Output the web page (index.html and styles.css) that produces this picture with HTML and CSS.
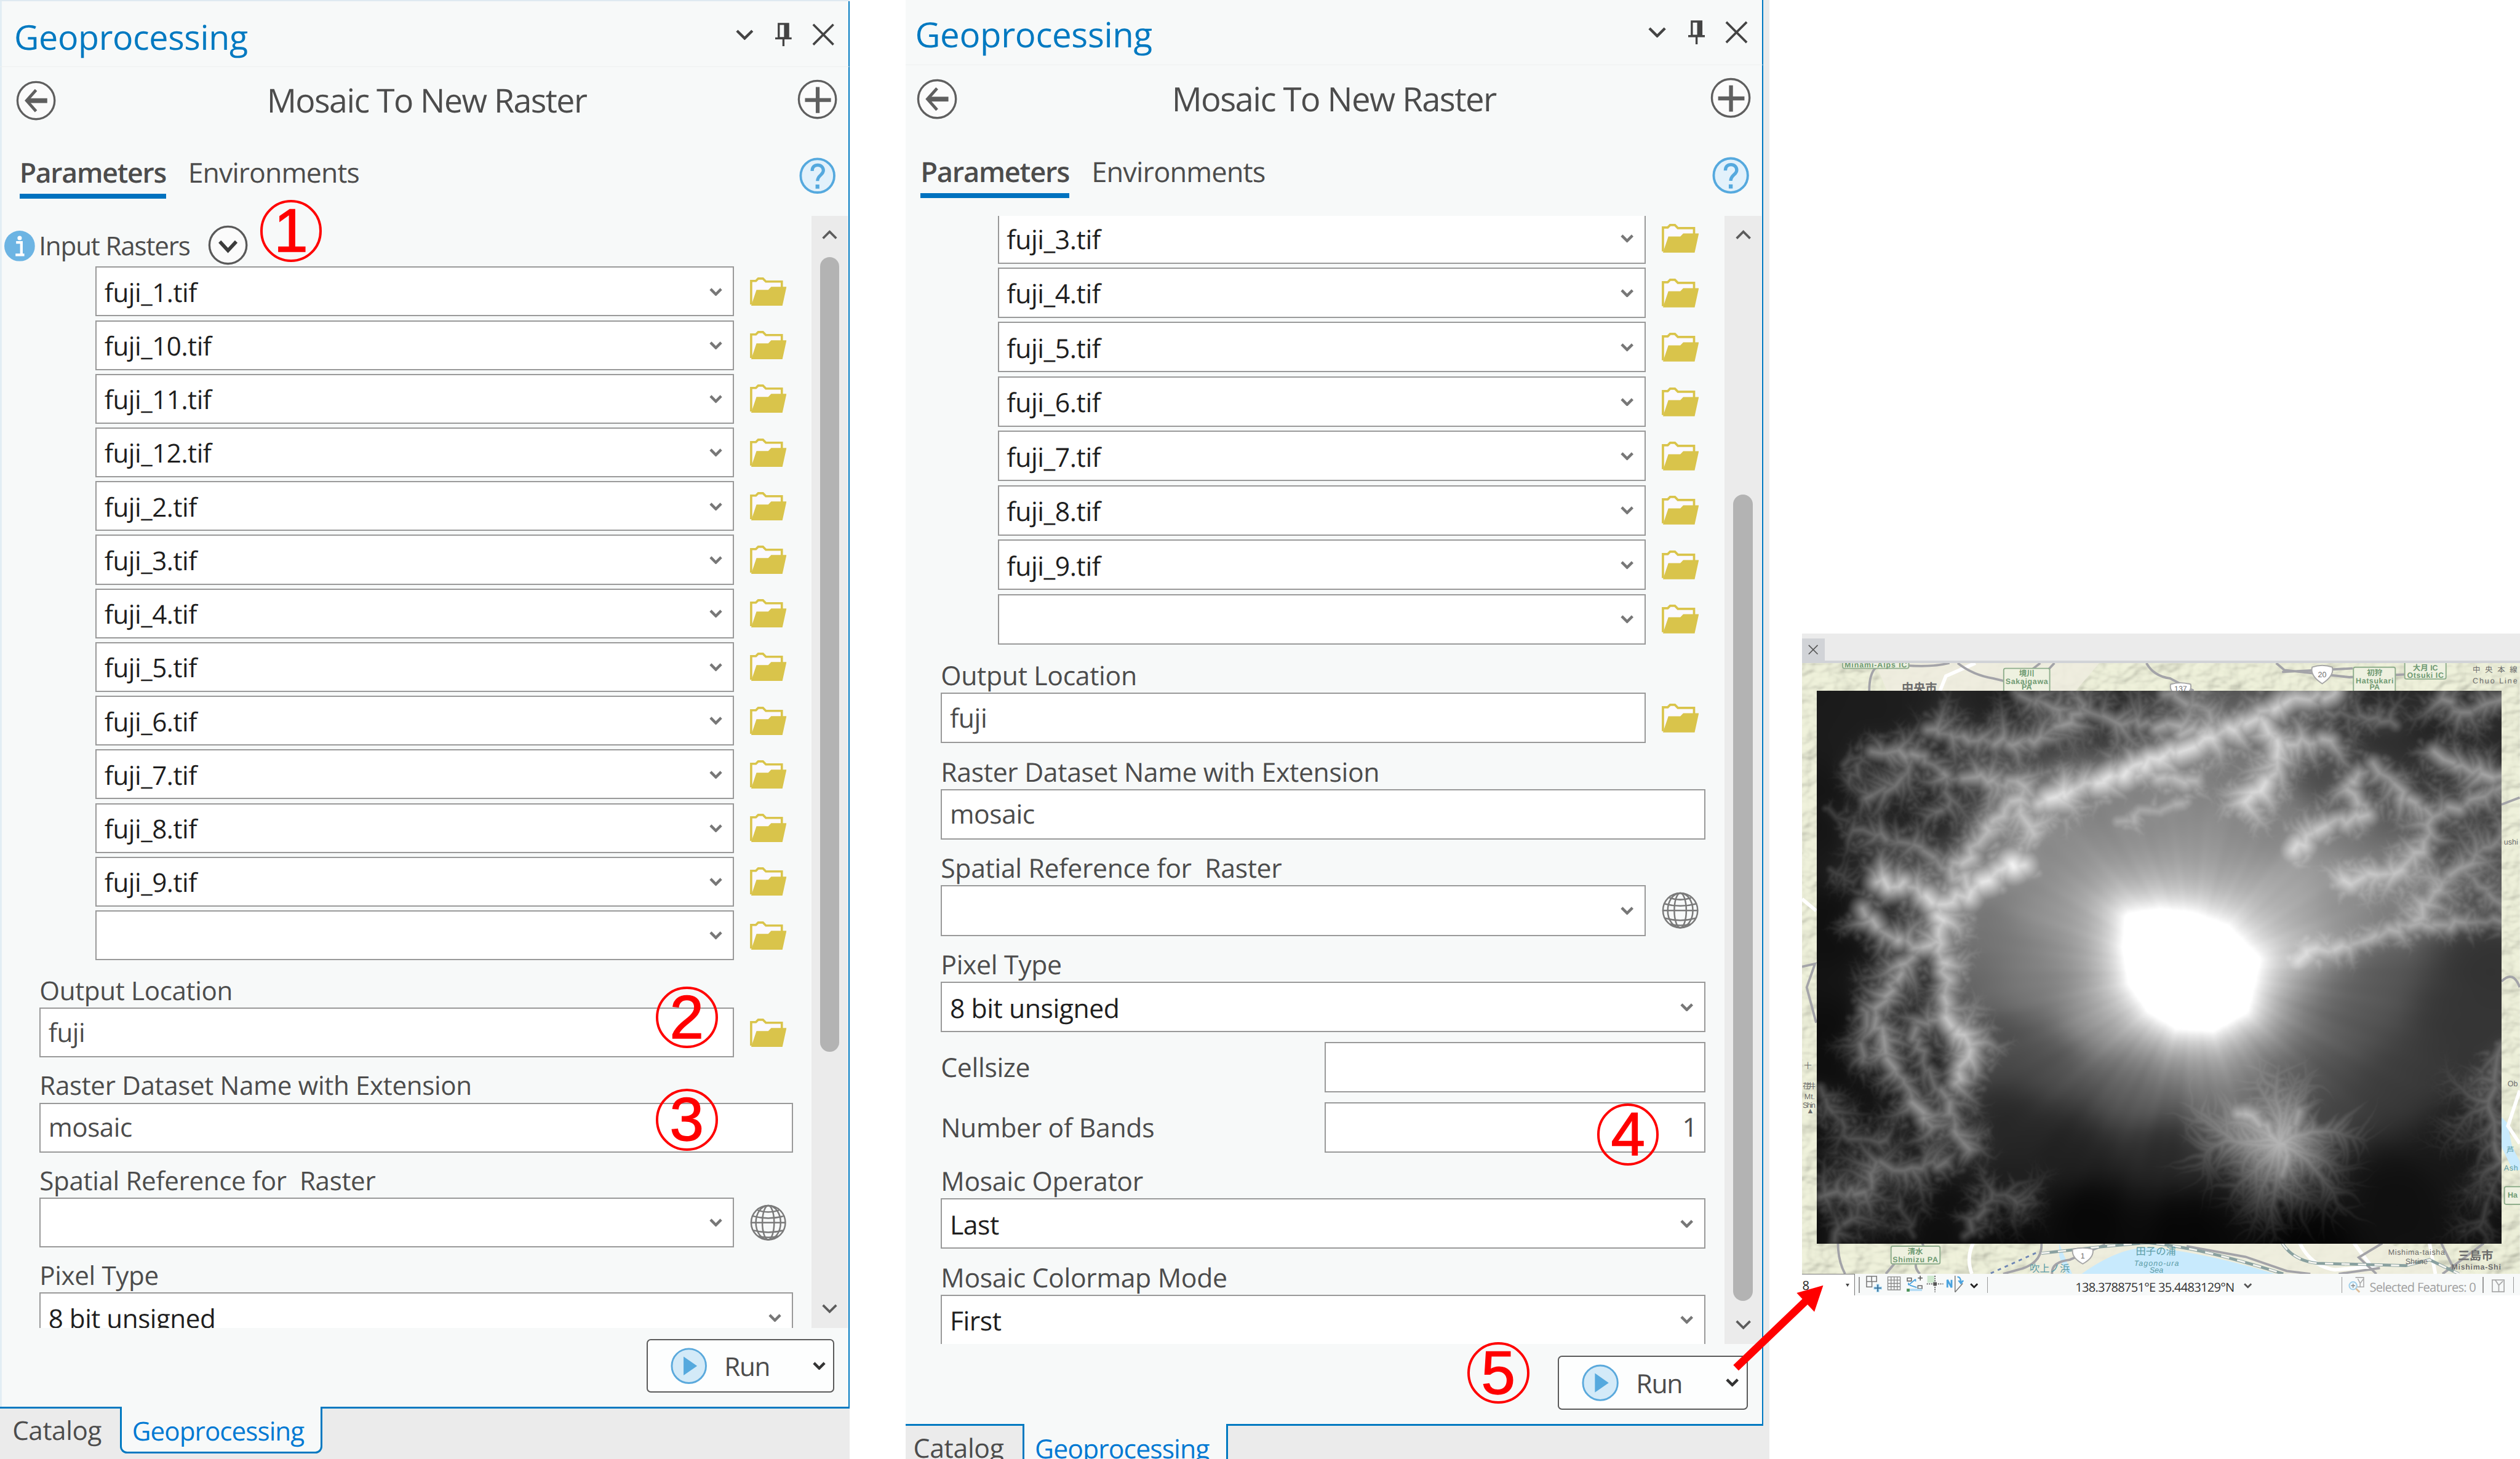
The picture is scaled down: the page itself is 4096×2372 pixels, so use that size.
FILE: index.html
```
<!DOCTYPE html>
<html lang="en">
<head>
<meta charset="utf-8">
<title>Mosaic To New Raster</title>
<link rel="stylesheet" href="styles.css">
</head>
<body>
<svg class="defs" width="0" height="0" aria-hidden="true">
  <symbol id="chev" viewBox="0 0 22 14"><path d="M2 2l9 9 9-9" fill="none" stroke="currentColor" stroke-width="4.600"/></symbol>
  <symbol id="chev-wide" viewBox="0 0 30 18"><path d="M2 2l13 13L28 2" fill="none" stroke="currentColor" stroke-width="4.500"/></symbol>
  <symbol id="pin" viewBox="0 0 28 40"><path d="M6 2h16v24H6z" fill="none" stroke="currentColor" stroke-width="3.500"/><path d="M15 2h8v24h-8z" fill="currentColor"/><path d="M0 26.500h28M14 27v13" fill="none" stroke="currentColor" stroke-width="3.500"/></symbol>
  <symbol id="cross" viewBox="0 0 40 40"><path d="M2 2l36 36M38 2L2 38" fill="none" stroke="currentColor" stroke-width="4"/></symbol>
  <symbol id="back" viewBox="0 0 68 68"><circle cx="34" cy="34" r="31.500" fill="#fbfbfb" stroke="currentColor" stroke-width="3.500"/><path d="M34 16L18 34l16 18" fill="none" stroke="currentColor" stroke-width="5"/><path d="M19 34h34" stroke="currentColor" stroke-width="8"/></symbol>
  <symbol id="plus" viewBox="0 0 68 68"><circle cx="34" cy="34" r="31.500" fill="#fbfbfb" stroke="currentColor" stroke-width="3.500"/><path d="M34.500 13v44M13 35h44" stroke="currentColor" stroke-width="6.500"/></symbol>
  <symbol id="down" viewBox="0 0 68 68"><circle cx="34" cy="34" r="31.500" fill="#fbfbfb" stroke="#5a5a5a" stroke-width="3.500"/><path d="M20 28l14 15 14-15" fill="none" stroke="#3c3c3c" stroke-width="6"/></symbol>
  <symbol id="help" viewBox="0 0 62 62"><circle cx="31" cy="31" r="28.500" fill="#e2f1fb" stroke="#55a9de" stroke-width="4"/><path d="M22 23c0-7 4-10 9.500-10S41 17 41 22c0 8-10 8-10 18" fill="none" stroke="#55a9de" stroke-width="5.500"/><path d="M31 46v7" stroke="#55a9de" stroke-width="6.500"/></symbol>
  <symbol id="info" viewBox="0 0 52 52"><circle cx="26" cy="26" r="26" fill="#6cb4e3"/><circle cx="26" cy="12.500" r="3.700" fill="#fff"/><path d="M20 20h9v20M19 41h15" fill="none" stroke="#fff" stroke-width="4.500"/></symbol>
  <symbol id="folder" viewBox="0 0 62 50"><path d="M2 46V6h8l4-4h8l5 5h27v12" fill="#fbf9ff" stroke="#d9c44b" stroke-width="3.800"/><path d="M2 48L11 21h20l5-5h26l-7 32z" fill="#d9c44b"/></symbol>
  <symbol id="globe" viewBox="0 0 62 62"><g fill="none" stroke="#7a7a7a" stroke-width="2.600"><circle cx="31" cy="31" r="29"/><ellipse cx="31" cy="31" rx="10" ry="29"/><ellipse cx="31" cy="31" rx="21" ry="29"/><path d="M2 31h58M5 20q26 7 52 0M5 44q26 7 52 0M13 10q18 6 36 0M14 54q17 4 34 0"/></g></symbol>
  <symbol id="play" viewBox="0 0 62 62"><circle cx="31" cy="31" r="29" fill="#d3eaf8" stroke="#5aa9dc" stroke-width="3"/><path d="M22 15v32l23-16z" fill="#55a9de"/></symbol>
</svg>

<main class="sheet">
  <section class="pane pane-a">
    <header class="titlebar"><h1>Geoprocessing</h1>
      <span class="winbtns"><svg class="wb-chev"><use href="#chev-wide"/></svg><svg class="wb-pin"><use href="#pin"/></svg><svg class="wb-x"><use href="#cross"/></svg></span></header>
    <div class="toolrow"><svg class="ic68 low"><use href="#back"/></svg><h2>Mosaic To New Raster</h2><svg class="ic68"><use href="#plus"/></svg></div>
    <nav class="tabs"><span class="tab on">Parameters</span><span class="tab">Environments</span><svg class="ic62"><use href="#help"/></svg></nav>
    <div class="body">
      <div class="form">
        <div class="inputs-head"><svg class="ic52"><use href="#info"/></svg><span>Input Rasters</span><svg class="ic68"><use href="#down"/></svg></div>
        <div class="rasters">
          <div class="line"><div class="box">fuji_1.tif<svg class="cv"><use href="#chev"/></svg></div><svg class="fd"><use href="#folder"/></svg></div>
          <div class="line"><div class="box">fuji_10.tif<svg class="cv"><use href="#chev"/></svg></div><svg class="fd"><use href="#folder"/></svg></div>
          <div class="line"><div class="box">fuji_11.tif<svg class="cv"><use href="#chev"/></svg></div><svg class="fd"><use href="#folder"/></svg></div>
          <div class="line"><div class="box">fuji_12.tif<svg class="cv"><use href="#chev"/></svg></div><svg class="fd"><use href="#folder"/></svg></div>
          <div class="line"><div class="box">fuji_2.tif<svg class="cv"><use href="#chev"/></svg></div><svg class="fd"><use href="#folder"/></svg></div>
          <div class="line"><div class="box">fuji_3.tif<svg class="cv"><use href="#chev"/></svg></div><svg class="fd"><use href="#folder"/></svg></div>
          <div class="line"><div class="box">fuji_4.tif<svg class="cv"><use href="#chev"/></svg></div><svg class="fd"><use href="#folder"/></svg></div>
          <div class="line"><div class="box">fuji_5.tif<svg class="cv"><use href="#chev"/></svg></div><svg class="fd"><use href="#folder"/></svg></div>
          <div class="line"><div class="box">fuji_6.tif<svg class="cv"><use href="#chev"/></svg></div><svg class="fd"><use href="#folder"/></svg></div>
          <div class="line"><div class="box">fuji_7.tif<svg class="cv"><use href="#chev"/></svg></div><svg class="fd"><use href="#folder"/></svg></div>
          <div class="line"><div class="box">fuji_8.tif<svg class="cv"><use href="#chev"/></svg></div><svg class="fd"><use href="#folder"/></svg></div>
          <div class="line"><div class="box">fuji_9.tif<svg class="cv"><use href="#chev"/></svg></div><svg class="fd"><use href="#folder"/></svg></div>
          <div class="line"><div class="box"><svg class="cv"><use href="#chev"/></svg></div><svg class="fd"><use href="#folder"/></svg></div>
        </div>
        <label class="lbl first">Output Location</label>
        <div class="line"><div class="box soft">fuji</div><svg class="fd"><use href="#folder"/></svg></div>
        <label class="lbl">Raster Dataset Name with Extension</label>
        <div class="line wide"><div class="box soft">mosaic</div></div>
        <label class="lbl">Spatial Reference for&nbsp; Raster</label>
        <div class="line"><div class="box"><svg class="cv"><use href="#chev"/></svg></div><svg class="gl"><use href="#globe"/></svg></div>
        <label class="lbl">Pixel Type</label>
        <div class="line wide"><div class="box">8 bit unsigned<svg class="cv"><use href="#chev"/></svg></div></div>
      </div>
      <div class="scroll"><svg class="arr up"><use href="#chev-wide"/></svg><div class="thumb thumb-a"></div><svg class="arr"><use href="#chev-wide"/></svg></div>
    </div>
    <footer class="foot"><div class="run"><svg class="ic62"><use href="#play"/></svg><span>Run</span><svg class="cv"><use href="#chev"/></svg></div></footer>
    <div class="docktabs"><span class="dock">Catalog</span><span class="dock active">Geoprocessing</span><span class="rest"></span></div>
  </section>

  <div class="pane-b-frame">
  <section class="pane pane-b">
    <header class="titlebar"><h1>Geoprocessing</h1>
      <span class="winbtns"><svg class="wb-chev"><use href="#chev-wide"/></svg><svg class="wb-pin"><use href="#pin"/></svg><svg class="wb-x"><use href="#cross"/></svg></span></header>
    <div class="toolrow"><svg class="ic68 low"><use href="#back"/></svg><h2>Mosaic To New Raster</h2><svg class="ic68"><use href="#plus"/></svg></div>
    <nav class="tabs"><span class="tab on">Parameters</span><span class="tab">Environments</span><svg class="ic62"><use href="#help"/></svg></nav>
    <div class="body">
      <div class="form scrolled">
        <div class="rasters">
          <div class="line"><div class="box">fuji_3.tif<svg class="cv"><use href="#chev"/></svg></div><svg class="fd"><use href="#folder"/></svg></div>
          <div class="line"><div class="box">fuji_4.tif<svg class="cv"><use href="#chev"/></svg></div><svg class="fd"><use href="#folder"/></svg></div>
          <div class="line"><div class="box">fuji_5.tif<svg class="cv"><use href="#chev"/></svg></div><svg class="fd"><use href="#folder"/></svg></div>
          <div class="line"><div class="box">fuji_6.tif<svg class="cv"><use href="#chev"/></svg></div><svg class="fd"><use href="#folder"/></svg></div>
          <div class="line"><div class="box">fuji_7.tif<svg class="cv"><use href="#chev"/></svg></div><svg class="fd"><use href="#folder"/></svg></div>
          <div class="line"><div class="box">fuji_8.tif<svg class="cv"><use href="#chev"/></svg></div><svg class="fd"><use href="#folder"/></svg></div>
          <div class="line"><div class="box">fuji_9.tif<svg class="cv"><use href="#chev"/></svg></div><svg class="fd"><use href="#folder"/></svg></div>
          <div class="line"><div class="box"><svg class="cv"><use href="#chev"/></svg></div><svg class="fd"><use href="#folder"/></svg></div>
        </div>
        <label class="lbl first">Output Location</label>
        <div class="line"><div class="box soft">fuji</div><svg class="fd"><use href="#folder"/></svg></div>
        <label class="lbl">Raster Dataset Name with Extension</label>
        <div class="line wide"><div class="box soft">mosaic</div></div>
        <label class="lbl">Spatial Reference for&nbsp; Raster</label>
        <div class="line"><div class="box"><svg class="cv"><use href="#chev"/></svg></div><svg class="gl"><use href="#globe"/></svg></div>
        <label class="lbl">Pixel Type</label>
        <div class="line wide"><div class="box">8 bit unsigned<svg class="cv"><use href="#chev"/></svg></div></div>
        <div class="line wide inline"><label>Cellsize</label><div class="box num"></div></div>
        <div class="line wide inline"><label>Number of Bands</label><div class="box num soft">1</div></div>
        <label class="lbl">Mosaic Operator</label>
        <div class="line wide"><div class="box">Last<svg class="cv"><use href="#chev"/></svg></div></div>
        <label class="lbl">Mosaic Colormap Mode</label>
        <div class="line wide"><div class="box">First<svg class="cv"><use href="#chev"/></svg></div></div>
      </div>
      <div class="scroll"><svg class="arr up"><use href="#chev-wide"/></svg><div class="thumb thumb-b"></div><svg class="arr"><use href="#chev-wide"/></svg></div>
    </div>
    <footer class="foot"><div class="run"><svg class="ic62"><use href="#play"/></svg><span>Run</span><svg class="cv"><use href="#chev"/></svg></div></footer>
    <div class="docktabs"><span class="dock">Catalog</span><span class="dock active">Geoprocessing</span><span class="rest"></span></div>
  </section>
  </div>

  <section class="mapwin">
    <div class="viewtabs"><span class="viewtab"><svg><use href="#cross"/></svg></span></div>
    <div class="mapview">
      <svg class="basemap" viewBox="3056 1125 1217 1036" preserveAspectRatio="none">
        <filter id="hills" x="0" y="0" width="100%" height="100%">
          <feTurbulence type="fractalNoise" baseFrequency="0.022 0.03" numOctaves="3" seed="7"/>
          <feDiffuseLighting surfaceScale="9" lighting-color="#f6f8e2"><feDistantLight azimuth="225" elevation="64"/></feDiffuseLighting>
        </filter>
        <rect x="3056" y="1125" width="1217" height="1036" fill="#e6e9d2"/>
        <rect x="3056" y="1125" width="1217" height="1036" filter="url(#hills)" opacity=".6"/>
        <path d="M3180 1125H3560L3520 1172H3200Z" fill="#efecdf" opacity=".85"/>
        <path d="M3440 2161L3470 2109H4050L4180 2161Z" fill="#eeedde" opacity=".85"/>
        <path d="M3530 2161Q3590 2118 3640 2116Q3730 2122 3858 2161Z" fill="#c8eafd"/>
        <path d="M3492 2109l8 20 14 32h-10l-12-30z" fill="#c8eafd"/>
        <path d="M4242 1895l10 10 8 40 13 25v15h-12l-19-40z" fill="#c8eafd"/>
        <g fill="none" stroke="#fff" stroke-width="6">
          <path d="M3290 1172l10-25 50-22M3346 2109q-12 25-2 52M3900 2109q20 40 60 45l70-6M4120 2109l10 52M3992 2109l30 40M4273 1850l-20 60 20 30M3056 1525l24 20"/>
        </g>
        <g fill="none" stroke="#a3a3a8" stroke-width="4">
          <path d="M3170 1172q0-30 12-40l30-5M3196 1125q70 10 110 0M3320 1125q25 20 60 26l50 12M3400 1172l60-47M3440 1172l44-47M3640 1125q12 22 40 26l40 21M3860 1125l14 12 110 12 160-8M3870 1140l120-6M3117 2109q0 30 12 52M3260 2109l8 20-18 12q-4 10 6 20M3198 2161l34-40M3462 2109q2 35-40 45l-25 7M3480 2161q-2-20 30-24l60-26M3708 2114l100 18 70 24 40 5M3966 2161l70-10M4040 2109l-40 24 30 28M4140 2109l22 45M4212 2109l-40 30-30 22M4242 1365l31-12M4242 1665q20-20 31 10M3056 1640l22-5-14 40 16 60"/>
        </g>
        <g fill="none" stroke="#89a09f" stroke-width="5"><path d="M3462 2126l110-12 70-6q90 8 230 53M3870 2109q20 30 60 34l150 4 40-10 50 24"/></g>
        <g fill="none" stroke="#f4f4f0" stroke-width="3" stroke-dasharray="14 14"><path d="M3462 2126l110-12 70-6q90 8 230 53M3870 2109q20 30 60 34l150 4 40-10 50 24"/></g>
        <path d="M3376 2160l82-37" fill="none" stroke="#6e86b5" stroke-width="3" stroke-dasharray="6 7"/>
        <g fill="#eef1e0" stroke="#8fae8c" stroke-width="2">
          <rect x="3125" y="1112" width="112" height="22" rx="3"/><rect x="3398" y="1134" width="78" height="44" rx="3"/><rect x="3991" y="1132" width="71" height="46" rx="3"/><rect x="4078" y="1118" width="70" height="34" rx="3"/><rect x="3207" y="2114" width="83" height="30" rx="3"/><rect x="4247" y="2013" width="40" height="30" rx="3"/>
        </g>
        <g fill="#fff" stroke="#a6a6a6" stroke-width="2">
          <path d="M3921 1132q17-6 34 0 4 14-17 28-21-14-17-28z"/><path d="M3681 1161q17-5 34 0 2 10-6 15h-22q-8-5-6-15z"/><path d="M3515 2119q17-4 34 0 3 14-17 25-20-11-17-25z"/>
        </g>
        <g class="lab" text-anchor="middle">
          <g class="green"><text x="3181" y="1132" textLength="106">Minami-Alps IC</text><text x="3437" y="1147">境川</text><text x="3437" y="1160" textLength="72">Sakaigawa</text><text x="3437" y="1170">PA</text>
          <text x="4027" y="1146">初狩</text><text x="4027" y="1159" textLength="64">Hatsukari</text><text x="4027" y="1170">PA</text>
          <text x="4113" y="1137">大月 IC</text><text x="4113" y="1150" textLength="62">Otsuki IC</text>
          <text x="3248" y="2128">清水</text><text x="3248" y="2141" textLength="77">Shimizu PA</text><text x="4261" y="2032">Ha</text></g>
          <g class="gray"><text x="3255" y="1174" class="big">中央市</text><text x="3938" y="1149">20</text><text x="3698" y="1173">137</text><text x="3532" y="2135">1</text>
          <text x="4231" y="1141" textLength="76">中央本線</text><text x="4231" y="1159" textLength="76">Chuo Line</text>
          <text x="4098" y="2129" textLength="96">Mishima-taisha</text><text x="4098" y="2144">Shrine</text><text x="4198" y="2137" class="big">三島市</text><text x="4199" y="2154" textLength="84" class="bold">Mishima-Shi</text>
          <text x="4258" y="1433" textLength="24">ushi</text><text x="4261" y="1843">Ob</text><text x="3066" y="1813">十</text><text x="3068" y="1847" textLength="22">荏井</text><text x="3069" y="1865" textLength="18">Mt.</text><text x="3068" y="1879" textLength="22">Shin</text><text x="3070" y="1889">▲</text></g>
          <g class="teal"><text x="3656" y="2129" class="mid">田子の浦</text><text x="3657" y="2147" font-style="italic" textLength="76">Tagono-ura</text><text x="3657" y="2159" font-style="italic">Sea</text><text x="3476" y="2158" class="mid">吹上ノ浜</text><text x="4257" y="1955">芦</text><text x="4258" y="1986" textLength="24">Ash</text></g>
        </g>
      </svg>
      <canvas class="dem" width="1161" height="937"></canvas>
    </div>
    <div class="status">
      <span class="scale">8<i class="tri"></i></span><i class="sep s1"></i>
      <svg class="tools" viewBox="0 0 168 30" fill="none">
        <g stroke="#777" stroke-width="1.600"><path d="M1 1h17v9H1zM1 10h9v9H1zM9.500 1v9"/></g><path d="M13 21h14M20 14v14" stroke="#a9dbf7" stroke-width="5"/><path d="M14 21h12M20 15v12" stroke="#3b6f95" stroke-width="2"/>
        <path d="M37 2h21v22H37zM42.500 2v22M47.700 2v22M53 2v22M37 7.500h21M37 13h21M37 18.500h21" stroke="#8a8a8a" stroke-width="1.400"/>
        <path d="M70 4h7v5h-7zM88 17h7v5h-7z" stroke="#666" stroke-width="1.600"/><path d="M88 4h8M92 0v8" stroke="#555" stroke-width="1.600"/><path d="M72 16L84 6M84 6v4M72 16v-4M74 16l12 4" stroke="#4aa3df" stroke-width="1.800"/><path d="M74 22h21v4H74z" fill="#b5dcf5"/><path d="M69 22h5v5h-5z" fill="#4b9158"/>
        <path d="M104 0h12v12h-12z" fill="#cfe9cf"/><path d="M103 14h28M117 0v28" stroke="#555" stroke-width="1.800" stroke-dasharray="2 1.800"/><path d="M114 11h6v6h-6z" fill="#555"/>
        <path d="M138 20V7l7 13V7" stroke="#4aa3df" stroke-width="3"/><path d="M151 0v28M151 28l13-15" stroke="#777" stroke-width="1.500"/><path d="M155 2q6 0 6 10M157 8l4 5 4-5" stroke="#4aa3df" stroke-width="2.500"/>
      </svg>
      <svg class="mini"><use href="#chev"/></svg><i class="sep s2"></i>
      <span class="coord">138.3788751°E 35.4483129°N</span><svg class="mini dim"><use href="#chev"/></svg>
      <i class="sep s3"></i>
      <svg class="selic" viewBox="0 0 28 28" fill="none"><path d="M12 2h14v16H14M20 12l6-8M20 12v6M20 12l-4-8" stroke="#aaa" stroke-width="1.600"/><circle cx="8" cy="16" r="6.500" fill="#eef8fd" stroke="#9fcfea" stroke-width="2"/><path d="M8 12.500v7M4.500 16h7" stroke="#888" stroke-width="1.500"/><path d="M13 21l6 6" stroke="#dcbc98" stroke-width="3"/></svg>
      <span class="sel">Selected Features: 0</span><i class="sep s4"></i>
      <svg class="boxic" viewBox="0 0 22 22" fill="none" stroke="#a8a8a8" stroke-width="1.800"><path d="M1 1h20v20H1zM6 1l6 9 7-7M12 10v11"/></svg><i class="sep s5"></i>
    </div>
  </section>

  <div class="mark m1">1</div><div class="mark m2">2</div><div class="mark m3">3</div><div class="mark m4">4</div><div class="mark m5">5</div>
  <svg class="pointer" viewBox="0 0 170 160"><path d="M10 149L128 36" stroke="#f00" stroke-width="13"/><path d="M158 9L113 22L143 54Z" fill="#f00"/></svg>
</main>
<script src="terrain.js"></script>
</body>
</html>
```
FILE: styles.css
```
html, body { margin: 0; padding: 0; background: #fff; }
body { --p: calc(100vw / 4273); overflow: hidden; font-family: "Open Sans", "Noto Sans", sans-serif; letter-spacing: -.022em; color: #4c4c4c; text-rendering: geometricPrecision; }
.defs { position: absolute; }
.sheet { position: relative; display: flex; align-items: flex-start; width: calc(4273 * var(--p)); height: calc(2475 * var(--p)); overflow: hidden; }
svg { display: block; flex: none; }
h1, h2 { margin: 0; font-weight: 400; }

.pane { --u: var(--p); box-sizing: border-box; width: calc(1441 * var(--u)); height: calc(2475 * var(--p)); display: flex; flex-direction: column; flex: none; background: #f7f9f9; font-size: calc(44 * var(--u)); }
.pane > * { flex: none; }
.pane-a { border-top: calc(3 * var(--u)) solid #dfeaf1; box-shadow: inset calc(3 * var(--u)) 0 #e2edf4; margin-right: calc(95 * var(--p)); }
.pane-b-frame { width: calc(1464 * var(--p)); height: calc(2475 * var(--p)); overflow: hidden; background: #ebebeb; flex: none; margin-right: calc(56 * var(--p)); }
.pane-b { --u: calc(var(--p) * 1.0145); margin: calc(-3 * var(--p)) 0 0 calc(-8.6 * var(--p)); width: calc(1442 * var(--u)); height: calc(2510 * var(--p)); }

.titlebar { height: calc(111 * var(--u)); border-bottom: calc(1 * var(--u)) solid #eef0f0; display: flex; justify-content: space-between; align-items: center; padding: 0 calc(24 * var(--u)) 0 calc(24 * var(--u)); border-right: calc(3 * var(--u)) solid #0079c1; }
.titlebar h1 { font-size: calc(58 * var(--u)); line-height: 1; color: #0079c1; padding-top: calc(11 * var(--u)); }
.winbtns { display: flex; align-items: center; color: #444; gap: calc(22 * var(--u)); padding-top: calc(3 * var(--u)); }
.wb-chev { width: calc(30 * var(--u)); height: calc(18 * var(--u)); margin-right: calc(15 * var(--u)); }
.wb-pin { width: calc(28 * var(--u)); height: calc(40 * var(--u)); margin-right: calc(12 * var(--u)); }
.wb-x { width: calc(38 * var(--u)); height: calc(38 * var(--u)); }
.toolrow { height: calc(112 * var(--u)); display: flex; align-items: center; justify-content: space-between; padding: 0 calc(19 * var(--u)) 0 calc(27 * var(--u)); color: #5f5f5f; border-right: calc(3 * var(--u)) solid #0079c1; }
.toolrow h2 { font-size: calc(56 * var(--u)); line-height: 1; color: #4c4c4c; letter-spacing: -.029em; }
.ic68 { width: calc(68 * var(--u)); height: calc(68 * var(--u)); }
.toolrow .ic68 { margin-top: calc(-4 * var(--u)); }
.toolrow .ic68.low { margin-top: calc(2 * var(--u)); }
.ic62 { width: calc(62 * var(--u)); height: calc(62 * var(--u)); }
.ic52 { width: calc(52 * var(--u)); height: calc(52 * var(--u)); }
.tabs { height: calc(140 * var(--u)); display: flex; align-items: flex-start; padding: calc(36 * var(--u)) calc(22 * var(--u)) 0 calc(33 * var(--u)); box-sizing: border-box; gap: calc(37 * var(--u)); font-size: calc(46.500 * var(--u)); letter-spacing: -.02em; border-right: calc(3 * var(--u)) solid #0079c1; }
.tab { line-height: calc(62 * var(--u)); height: calc(65 * var(--u)); padding-bottom: calc(1 * var(--u)); }
.tab.on { font-weight: 600; border-bottom: calc(9 * var(--u)) solid #0072bf; width: calc(249 * var(--u)); letter-spacing: -.028em; }
.tabs svg { margin: calc(5 * var(--u)) 0 0 auto; }

.body { height: calc(1886 * var(--u)); display: flex; border-right: calc(3 * var(--u)) solid #0079c1; overflow: hidden; }
.form { flex: 1; min-width: 0; }
.form.scrolled { margin-top: calc(-5 * var(--u)); }
.inputs-head { height: calc(86 * var(--u)); box-sizing: border-box; padding: calc(17 * var(--u)) 0 0 calc(7 * var(--u)); display: flex; align-items: center; white-space: nowrap; letter-spacing: -.028em; }
.inputs-head span { margin: 0 calc(20 * var(--u)) 0 calc(7 * var(--u)); width: calc(267 * var(--u)); line-height: 1; }
.inputs-head .ic68 { margin-top: calc(-3 * var(--u)); }
.rasters { padding-left: calc(95 * var(--u)); display: grid; gap: calc(6.400 * var(--u)); }
.line { height: calc(84.600 * var(--u)); margin-left: calc(67 * var(--u)); width: calc(1267 * var(--u)); display: flex; align-items: center; gap: calc(27 * var(--u)); }
.rasters .line { width: calc(1172 * var(--u)); }
.line.wide { width: calc(1278 * var(--u)); }
.box { flex: 1; height: 100%; box-sizing: border-box; border: calc(3 * var(--u)) solid #999; background: #fff; color: #1e1e1e; display: flex; align-items: center; justify-content: space-between; padding: calc(4 * var(--u)) calc(18 * var(--u)) 0 calc(13 * var(--u)); line-height: 1; white-space: pre; letter-spacing: -.011em; }
.box.soft { color: #4c4c4c; padding-top: 0; }
.cv { width: calc(22 * var(--u)); height: calc(14 * var(--u)); color: #777; margin-left: auto; margin-top: calc(-3 * var(--u)); }
.fd { width: calc(62 * var(--u)); height: calc(50 * var(--u)); margin-top: calc(2 * var(--u)); }
.gl { width: calc(62 * var(--u)); height: calc(62 * var(--u)); }
.lbl { display: block; box-sizing: border-box; height: calc(76.400 * var(--u)); padding: calc(26 * var(--u)) 0 0 calc(67 * var(--u)); line-height: calc(44 * var(--u)); white-space: pre; }
.lbl.first { height: calc(80.500 * var(--u)); padding-top: calc(30 * var(--u)); }
.line.inline { margin-top: calc(16 * var(--u)); justify-content: space-between; }
.box.num { flex: none; width: calc(637 * var(--u)); justify-content: flex-end; padding-right: calc(12 * var(--u)); }
.scroll { width: calc(62 * var(--u)); background: #ebebeb; display: flex; flex-direction: column; align-items: center; padding: calc(24 * var(--u)) 0; box-sizing: border-box; color: #5c5c5c; margin-right: calc(1 * var(--u)); }
.arr { width: calc(26 * var(--u)); height: calc(16 * var(--u)); margin-top: auto; }
.arr.up { transform: scaleY(-1); margin-top: 0; }
.thumb { width: calc(33 * var(--u)); border-radius: calc(17 * var(--u)); background: #b3b3b3; }
.thumb-a { margin-top: calc(30 * var(--u)); height: calc(1348 * var(--u)); }
.thumb-b { margin-top: calc(426 * var(--u)); height: calc(1348 * var(--u)); }

.foot { height: calc(134 * var(--u)); border-right: calc(3 * var(--u)) solid #0079c1; display: flex; justify-content: flex-end; align-items: flex-start; padding: calc(19 * var(--u)) calc(24 * var(--u)) 0 0; box-sizing: border-box; }
.run { width: calc(318 * var(--u)); height: calc(91 * var(--u)); box-sizing: border-box; border: calc(3 * var(--u)) solid #5a5a5a; border-radius: calc(7 * var(--u)); background: #fdfefe; display: flex; align-items: center; padding: 0 calc(13 * var(--u)) 0 calc(38 * var(--u)); }
.run span { margin-left: calc(29 * var(--u)); line-height: 1; padding-top: calc(3 * var(--u)); letter-spacing: -.03em; }
.run .cv { color: #333; margin-top: 0; }
.docktabs { height: calc(88 * var(--u)); display: flex; align-items: flex-start; background: #ebebeb; }
.dock { box-sizing: border-box; height: calc(79 * var(--u)); line-height: calc(75 * var(--u)); width: calc(203 * var(--u)); padding-left: calc(21 * var(--u)); border-top: calc(4 * var(--u)) solid #0079c1; letter-spacing: -.008em; }
.dock.active { width: calc(344 * var(--u)); padding-left: calc(18 * var(--u)); border: calc(4 * var(--u)) solid #0079c1; border-top: 0; border-radius: 0 0 calc(12 * var(--u)) calc(12 * var(--u)); background: #f7f9f9; color: #0079d3; line-height: calc(83 * var(--u)); letter-spacing: -.022em; }
.rest { flex: 1; border-top: calc(4 * var(--u)) solid #0079c1; }

.mapwin { width: calc(1217 * var(--p)); margin-top: calc(1074 * var(--p)); flex: none; }
.viewtabs { height: calc(51 * var(--p)); box-sizing: border-box; background: #ebebeb; border-bottom: calc(5 * var(--p)) solid #d1d3d7; display: flex; align-items: flex-end; }
.viewtab { width: calc(38 * var(--p)); height: calc(38 * var(--p)); background: #d1d3d7; display: grid; place-items: center; color: #555; }
.viewtab svg { width: calc(17 * var(--p)); height: calc(17 * var(--p)); }
.mapview { height: calc(1036 * var(--p)); position: relative; overflow: hidden; }
.basemap { width: 100%; height: 100%; }
.dem { position: absolute; left: calc(25 * var(--p)); top: calc(47 * var(--p)); width: calc(1161 * var(--p)); height: calc(937 * var(--p)); }
.lab { font-family: "Liberation Sans", "Noto Sans CJK JP", sans-serif; font-size: 13px; letter-spacing: 0; }
.green { fill: #6f9a72; font-weight: 600; }
.gray { fill: #6b6b6b; }
.teal { fill: #5c9ca6; }
.big { font-size: 20px; font-weight: 700; }
.mid { font-size: 17px; }
.bold { font-weight: 700; }
.status { height: calc(36 * var(--p)); background: #f7f9f9; display: flex; align-items: center; font-size: calc(21 * var(--p)); line-height: 1; white-space: pre; letter-spacing: -.038em; }
.status > * { flex: none; }
.scale { width: calc(89 * var(--p)); height: 100%; box-sizing: border-box; background: #fff; border-top: calc(2 * var(--p)) solid #777; border-right: calc(2 * var(--p)) solid #777; display: flex; align-items: center; justify-content: space-between; padding-right: calc(8 * var(--p)); color: #222; }
.tri { border: calc(4 * var(--p)) solid transparent; border-top: calc(6 * var(--p)) solid #444; border-bottom: 0; }
.sep { width: calc(1.600 * var(--p)); height: calc(27 * var(--p)); background: #999; }
.s1 { margin: 0 calc(11 * var(--p)) 0 calc(7 * var(--p)); }
.tools { width: calc(168 * var(--p)); height: calc(30 * var(--p)); }
.mini { width: calc(14 * var(--p)); height: calc(9 * var(--p)); color: #222; margin-left: calc(8 * var(--p)); margin-top: calc(4 * var(--p)); }
.s2 { margin: 0 calc(148 * var(--p)) 0 calc(15 * var(--p)); }
.coord { width: calc(264 * var(--p)); color: #333; padding-top: calc(8 * var(--p)); }
.mini.dim { margin-left: calc(20 * var(--p)); width: calc(16 * var(--p)); color: #555; }
.status .s3 { margin-left: auto; }
.selic { width: calc(28 * var(--p)); height: calc(30 * var(--p)); margin: 0 calc(8 * var(--p)) 0 calc(10 * var(--p)); }
.sel { width: calc(181 * var(--p)); color: #a0a0a0; padding-top: calc(6 * var(--p)); }
.s4 { margin: 0 calc(14 * var(--p)) 0 calc(11 * var(--p)); }
.boxic { width: calc(22 * var(--p)); height: calc(22 * var(--p)); margin-top: calc(4 * var(--p)); }
.s5 { margin: 0 calc(10 * var(--p)) 0 calc(14 * var(--p)); }

.mark { position: absolute; box-sizing: border-box; width: calc(105 * var(--p)); height: calc(105 * var(--p)); border: calc(4.500 * var(--p)) solid #f00; border-radius: 50%; color: #f00; font: 400 calc(104 * var(--p)) / calc(97 * var(--p)) "Liberation Sans", sans-serif; text-align: center; letter-spacing: 0; -webkit-text-stroke: calc(1.500 * var(--p)) #f00; }
.m1 { left: calc(441 * var(--p)); top: calc(339 * var(--p)); }
.m2 { left: calc(1112 * var(--p)); top: calc(1673 * var(--p)); }
.m3 { left: calc(1112 * var(--p)); top: calc(1847 * var(--p)); }
.m4 { left: calc(2708 * var(--p)); top: calc(1872 * var(--p)); }
.m5 { left: calc(2488 * var(--p)); top: calc(2276 * var(--p)); }
.pointer { position: absolute; left: calc(2934 * var(--p)); top: calc(2171 * var(--p)); width: calc(170 * var(--p)); height: calc(160 * var(--p)); }
```
FILE: terrain.js
```
// Shaded elevation raster: smooth base surface plus branching ridge lines.
(function () {
  const cv = document.querySelector('.dem'), W = cv.width, H = cv.height;
  const ctx = cv.getContext('2d');
  const SX = W / 1477, SY = H / 1267, OX = 52, OY = 151;
  let seed = 4211;
  const rnd = () => { seed = (seed * 1664525 + 1013904223) >>> 0; return seed / 4294967296; };
  const ridge = new Float32Array(W * H);
  const SLOPE = 3.6;

  // every crest falls away at the same rate, so neighbours meet in a sharp valley
  function seg(x0, y0, a0, x1, y1, a1) {
    const R = Math.max(a0, a1) / SLOPE, dx = x1 - x0, dy = y1 - y0, L = dx * dx + dy * dy || 1;
    const xa = Math.max(0, Math.floor(Math.min(x0, x1) - R)), xb = Math.min(W - 1, Math.ceil(Math.max(x0, x1) + R));
    const ya = Math.max(0, Math.floor(Math.min(y0, y1) - R)), yb = Math.min(H - 1, Math.ceil(Math.max(y0, y1) + R));
    for (let y = ya; y <= yb; y++) for (let x = xa; x <= xb; x++) {
      let t = ((x - x0) * dx + (y - y0) * dy) / L; t = t < 0 ? 0 : t > 1 ? 1 : t;
      const ex = x - x0 - t * dx, ey = y - y0 - t * dy;
      const v = a0 + (a1 - a0) * t - SLOPE * Math.sqrt(ex * ex + ey * ey);
      const i = y * W + x; if (v > ridge[i]) ridge[i] = v;
    }
  }
  function spur(x, y, ang, len, amp, depth) {
    const step = 5, n = Math.max(2, Math.round(len / step));
    let side = rnd() < .5 ? 1 : -1;
    for (let i = 0; i < n; i++) {
      const a0 = amp * (1 - .85 * i / n), a1 = amp * (1 - .85 * (i + 1) / n);
      ang += (rnd() - .5) * .6;
      const nx = x + Math.cos(ang) * step, ny = y + Math.sin(ang) * step;
      seg(x, y, a0, nx, ny, a1);
      if (depth > 0 && i > 0 && rnd() < .68) {
        spur(nx, ny, ang + side * (.7 + rnd() * .5), Math.max(12, len * (.25 + rnd() * .3)), a1 * .95, depth - 1);
        side = -side;
      }
      x = nx; y = ny;
    }
  }
  function range(pts, amp, len, gap) {
    amp *= .78; len *= 1.6; gap = gap || 12;
    const p = pts.map(q => [(q[0] - OX) * SX, (q[1] - OY) * SY]);
    for (let i = 0; i + 1 < p.length; i++) {
      let [x, y] = p[i]; const [ex, ey] = p[i + 1];
      const n = Math.max(1, Math.round(Math.hypot(ex - x, ey - y) / gap));
      const ang = Math.atan2(ey - y, ex - x);
      for (let j = 1; j <= n; j++) {
        const jit = j === n ? 0 : 15;
        const nx = p[i][0] + (ex - p[i][0]) * j / n + (rnd() - .5) * jit, ny = p[i][1] + (ey - p[i][1]) * j / n + (rnd() - .5) * jit;
        const a = amp * (.8 + rnd() * .35);
        seg(x, y, a, nx, ny, a);
        for (const s of [-1, 1]) if (rnd() < .75) spur(nx, ny, ang + s * (.7 + rnd() * .8), len * (.4 + rnd() * .9), a * .95, 2);
        x = nx; y = ny;
      }
    }
  }
  function blur(src, r, horiz) {
    const out = new Float32Array(W * H), n = horiz ? W : H, m = horiz ? H : W, st = horiz ? 1 : W, so = horiz ? W : 1;
    for (let j = 0; j < m; j++) {
      let s = 0; const o = j * so;
      for (let i = -r; i <= r; i++) s += src[o + Math.min(n - 1, Math.max(0, i)) * st];
      for (let i = 0; i < n; i++) {
        out[o + i * st] = s / (2 * r + 1);
        s += src[o + Math.min(n - 1, i + r + 1) * st] - src[o + Math.max(0, i - r) * st];
      }
    }
    return out;
  }
  const smooth = (s, r) => blur(blur(blur(blur(s, r, true), r, false), r, true), r, false);

  // northern ranges
  range([[530,410],[620,370],[720,335],[800,300],[900,258],[1000,215],[1060,180],[1170,155]], 125, 28);
  range([[720,335],[800,350],[870,357]], 80, 14);
  range([[1010,215],[1045,265],[1045,330],[975,405]], 120, 36);
  range([[1045,265],[1160,265]], 100, 40);
  range([[290,240],[400,265],[520,270],[580,230],[640,200],[720,225],[800,230],[900,255]], 90, 42);
  range([[480,155],[560,190],[580,230]], 85, 36); range([[640,200],[600,155]], 75, 36); range([[900,255],[890,190],[800,160]], 75, 38);
  range([[700,450],[770,425],[850,405]], 60, 10);
  // western ranges
  range([[170,290],[270,300],[330,345],[430,355],[500,370],[490,430],[520,480]], 90, 36);
  range([[270,300],[220,370],[150,400]], 75, 40); range([[110,320],[150,310],[120,360]], 55, 26);
  range([[330,345],[340,400],[290,440]], 70, 34); range([[430,355],[420,420]], 70, 32);
  range([[500,550],[450,560],[385,610],[315,640]], 140, 14); range([[315,640],[250,600],[180,590]], 135, 34);
  range([[385,610],[340,560],[400,500],[430,450],[490,400]], 95, 28); range([[340,560],[250,500],[130,470]], 70, 36);
  range([[315,640],[320,730],[330,830],[330,900],[380,960],[350,1050]], 125, 34);
  range([[320,730],[260,740],[180,690],[150,650]], 115, 38);
  range([[260,740],[200,850],[180,900],[200,980],[240,1050],[300,1150]], 105, 42);
  range([[330,900],[260,910],[280,1000],[330,1080],[380,1210]], 85, 34);
  range([[150,880],[150,1000]], 80, 30);
  range([[60,1310],[170,1290],[180,1230],[240,1250],[330,1230]], 78, 48); range([[60,1060],[110,1170],[200,1180]], 60, 40);
  range([[90,1410],[170,1300]], 62, 44); range([[370,1400],[430,1300],[500,1330]], 62, 42); range([[260,1400],[230,1330]], 50, 36);
  range([[80,560],[130,590]], 44, 26); range([[70,420],[120,450]], 38, 26);
  // eastern ranges
  range([[1080,515],[1150,460],[1240,435],[1190,370],[1220,340]], 98, 26);
  range([[1250,310],[1330,400],[1380,440],[1360,520],[1280,570],[1180,590]], 92, 30);
  range([[1380,440],[1460,400],[1529,370]], 92, 36); range([[1529,345],[1430,325],[1380,290]], 105, 34);
  range([[1529,170],[1440,200],[1400,170]], 85, 38); range([[1300,230],[1200,210],[1100,200]], 58, 34);
  range([[1090,770],[1130,740],[1200,740],[1330,690],[1450,682],[1529,680]], 80, 20);
  range([[1340,690],[1400,590],[1470,530],[1529,480]], 80, 42); range([[1440,560],[1500,610],[1529,640]], 62, 38);
  // south-east slopes
  range([[1529,960],[1500,1090],[1529,1230]], 66, 70, 18); range([[1529,1240],[1480,1380]], 48, 60, 18);
  // minor hills inside the mountain areas
  const cover = smooth(ridge, 14);
  for (let i = 0; i < 2600; i++) {
    const x = rnd() * W | 0, y = rnd() * H | 0, q = y * W + x;
    if (cover[q] > 9 && ridge[q] < 22) spur(x, y, rnd() * 6.28, 16 + rnd() * 18, 22 + cover[q] * .7, 1);
  }
  // radial volcano in the south
  const vx = (1050 - OX) * SX, vy = (1190 - OY) * SY;
  for (let i = 0; i < 24; i++) spur(vx, vy, i * Math.PI / 12 + rnd() * .16, 110 + rnd() * 70, 88, 1);
  range([[960,1120],[1015,1145],[1060,1190],[1055,1260]], 105, 20); range([[1060,1180],[1090,1110]], 90, 20);

  const broad = smooth(ridge, 13), fine = blur(blur(ridge, 1, true), 1, false);

  // soft base surface described by weighted control tones
  const tones = [[52,151,26],[170,200,28],[52,420,20],[90,700,14],[80,950,12],[120,1200,14],[60,1400,14],[300,400,24],[500,200,26],[700,200,32],[760,390,122],
    [560,480,128],[620,420,118],[520,650,128],[480,560,122],[480,800,112],[430,800,100],[430,700,112],[250,800,18],[250,1000,12],[440,960,66],[560,1000,64],[640,900,112],[480,1150,34],[600,1200,26],[650,1350,4],[450,1400,8],[850,1380,3],[800,1200,30],[300,1380,14],
    [900,450,128],[1050,450,120],[950,380,116],[1150,330,70],[1270,250,46],[1400,240,30],[1500,300,38],[1320,600,122],[1180,640,130],[1100,600,150],[1450,500,60],
    [1100,700,140],[1250,820,78],[1480,780,48],[1420,900,50],[1200,900,72],[1300,1050,54],[1100,1050,60],[920,1060,88],[740,1080,70],[1300,1300,14],[1440,1200,22],[1500,1400,14],[1100,1400,2],[1220,160,36]];
  const g = 8, gw = Math.ceil(W / g) + 2, gh = Math.ceil(H / g) + 2, base = new Float32Array(gw * gh);
  for (let j = 0; j < gh; j++) for (let i = 0; i < gw; i++) {
    const x = i * g / SX + OX, y = j * g / SY + OY; let s = 0, w = 0;
    for (const t of tones) { const q = 1 / Math.pow((x - t[0]) ** 2 + (y - t[1]) ** 2 + 3500, 1.8); s += q * t[2]; w += q; }
    base[j * gw + i] = s / w;
  }
  // summit plateau outline; brightness decays with distance from it
  const top = [[728,672],[790,662],[860,670],[930,698],[995,768],[985,820],[972,880],[905,920],[830,915],[775,880],[735,820],[722,740]];
  function summit(x, y) {
    let inside = false, best = 1e9;
    for (let i = 0, j = top.length - 1; i < top.length; j = i++) {
      const [ax, ay] = top[j], [bx, by] = top[i];
      if ((ay > y) !== (by > y) && x < (bx - ax) * (y - ay) / (by - ay) + ax) inside = !inside;
      const dx = bx - ax, dy = by - ay; let t = ((x - ax) * dx + (y - ay) * dy) / (dx * dx + dy * dy); t = t < 0 ? 0 : t > 1 ? 1 : t;
      best = Math.min(best, Math.hypot(x - ax - t * dx, y - ay - t * dy));
    }
    return inside ? 0 : best;
  }
  const img = ctx.createImageData(W, H);
  for (let y = 0; y < H; y++) for (let x = 0; x < W; x++) {
    const fx = x / g, fy = y / g, i = fx | 0, j = fy | 0, u = fx - i, v = fy - j, o = j * gw + i;
    let b = (base[o] * (1 - u) + base[o + 1] * u) * (1 - v) + (base[o + gw] * (1 - u) + base[o + gw + 1] * u) * v;
    const mx = x / SX + OX, my = y / SY + OY, th = Math.atan2(my - 790, mx - 862);
    const d = summit(mx, my) * (1 + .03 * Math.sin(23 * th) + .02 * Math.sin(57 * th + 1));
    b = b + (278 - b) * Math.exp(-Math.pow(d / 92, .95));
    const q = y * W + x;
    const r = fine[q] * 1.1 + broad[q] * .65;
    const c = Math.min(255, b + r * (1 - b / 340));
    const k = q * 4; img.data[k] = img.data[k + 1] = img.data[k + 2] = c; img.data[k + 3] = 255;
  }
  ctx.putImageData(img, 0, 0);
})();
```
